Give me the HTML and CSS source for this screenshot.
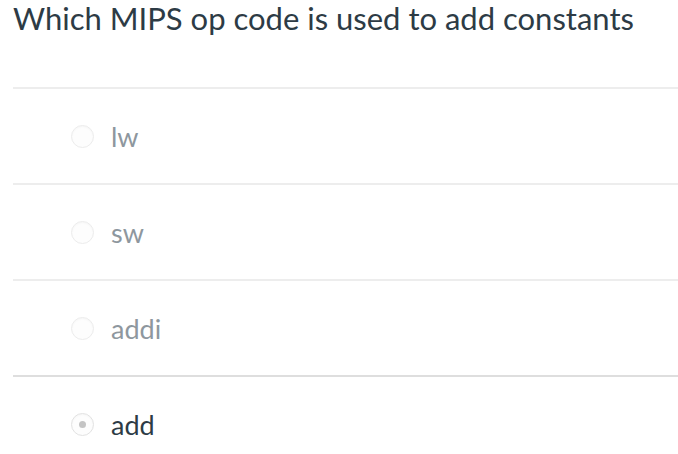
FILE: index.html
```html
<!DOCTYPE html>
<html>
<head>
<meta charset="utf-8">
<link rel="stylesheet" href="styles.css">
</head>
<body>
<div class="quiz">
  <h1 class="question">Which MIPS op code is used to add constants</h1>
  <ul class="answers">
    <li class="answer"><span class="radio"></span><span class="label">lw</span></li>
    <li class="answer"><span class="radio"></span><span class="label">sw</span></li>
    <li class="answer"><span class="radio"></span><span class="label">addi</span></li>
    <li class="answer selected"><span class="radio"><span class="dot"></span></span><span class="label">add</span></li>
  </ul>
</div>
</body>
</html>
```
FILE: styles.css
```css
html, body {
  margin: 0;
  padding: 0;
  background: #ffffff;
}
body {
  font-family: Lato, "Liberation Sans", sans-serif;
  color: #2d3b45;
}
.quiz {
  padding-left: 13px;
}
.question {
  margin: 0;
  height: 87px;
  font-size: 31px;
  font-weight: 400;
  line-height: 37px;
  color: #2d3b45;
  white-space: nowrap;
}
.answers {
  list-style: none;
  margin: 0;
  padding: 0;
}
.answer {
  display: flex;
  align-items: center;
  height: 94px;
  border-top: 2px solid #ededed;
  padding-left: 58px;
}
.answer.selected {
  border-top-color: #dedede;
}
.radio {
  width: 21px;
  height: 21px;
  border: 1px solid #ececec;
  border-radius: 50%;
  background: #fdfdfd;
  box-shadow: inset 0 1px 2px rgba(0,0,0,0.03);
  display: flex;
  align-items: center;
  justify-content: center;
  flex-shrink: 0;
}
.selected .radio {
  border-color: #e2e2e2;
}
.dot {
  width: 7px;
  height: 7px;
  border-radius: 50%;
  background: #c4c4c4;
}
.label {
  margin-left: 17px;
  font-size: 27px;
  color: #8e979e;
}
.selected .label {
  color: #2d3b45;
}
```
